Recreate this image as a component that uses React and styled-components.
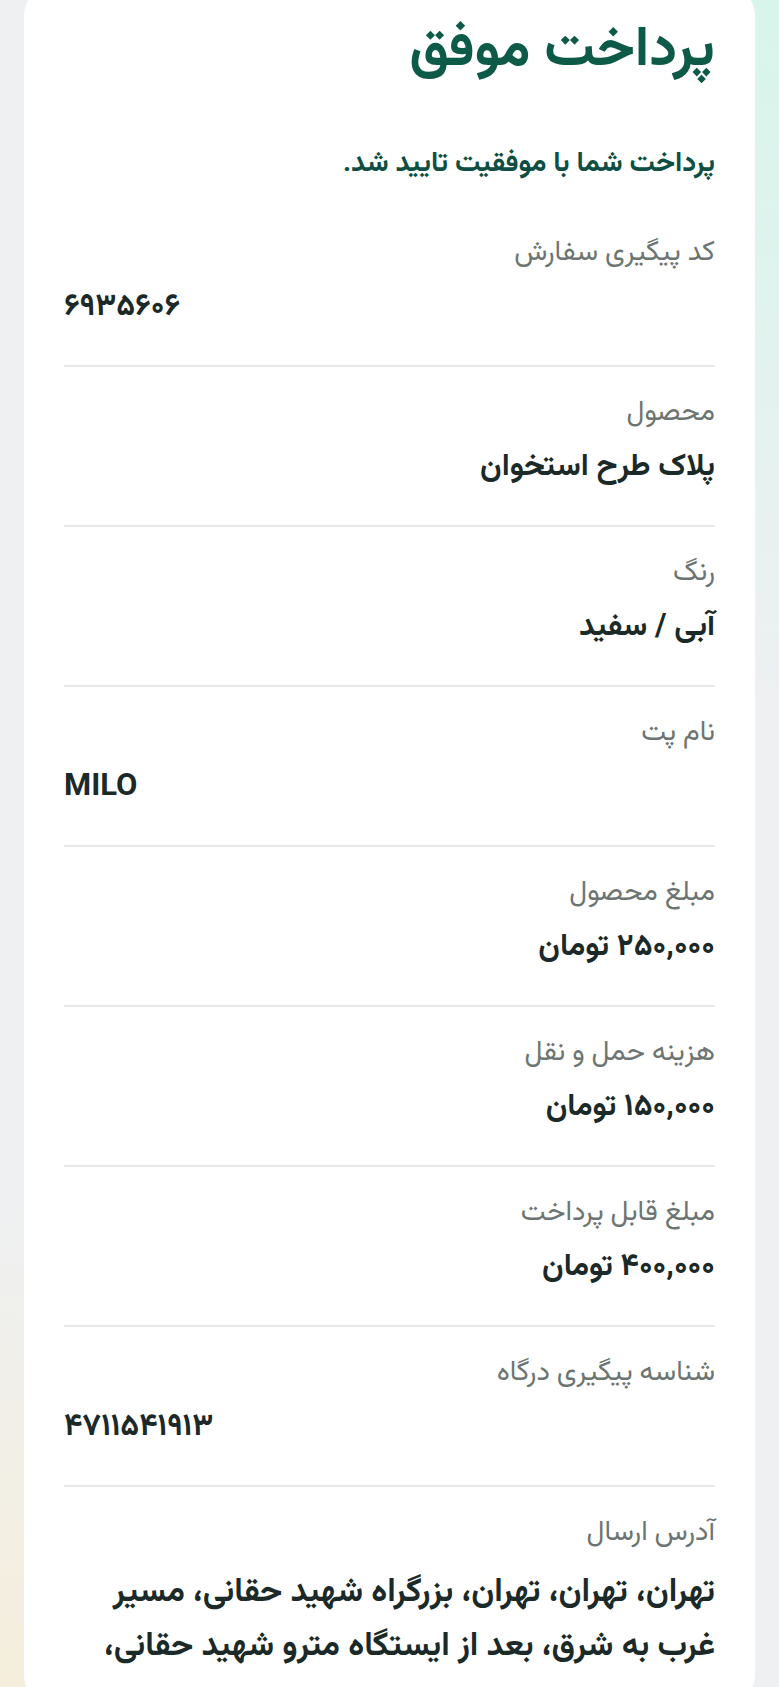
import React from 'react';
import styled, { createGlobalStyle } from 'styled-components';

const GlobalStyle = createGlobalStyle`
  * {
    box-sizing: border-box;
  }
  html, body {
    margin: 0;
    padding: 0;
  }
  body {
    min-height: 100vh;
    overflow: hidden;
    font-family: Roboto, Vazirmatn, "Noto Sans Arabic", "DejaVu Sans", sans-serif;
    background:
      radial-gradient(ellipse 520px 700px at 100% 0%, #d7f5eb 0%, rgba(215, 245, 235, 0) 100%),
      radial-gradient(ellipse 420px 520px at 0% 100%, #f5eedb 0%, rgba(245, 238, 219, 0) 100%),
      #eef0f2;
  }
`;

const Page = styled.div`
  display: flex;
  justify-content: center;
  padding: 0 24px;
`;

const Card = styled.div`
  width: 100%;
  margin-top: -16px;
  min-height: 1720px;
  background: #ffffff;
  border-radius: 32px;
  padding: 24px 40px 0;
  direction: rtl;
`;

const Title = styled.h1`
  margin: 0;
  font-size: 56px;
  line-height: 76px;
  font-weight: 700;
  color: #0d5a49;
`;

const Subtitle = styled.p`
  margin: 58px 0 0;
  font-size: 28px;
  line-height: 40px;
  font-weight: 700;
  color: #0f4f43;
`;

const List = styled.div`
  display: flex;
  flex-direction: column;
  margin-top: 25px;
`;

const Row = styled.div`
  display: flex;
  flex-direction: column;
  gap: 10px;
  padding: 24px 0 36px;
  border-bottom: ${({ $last }) => ($last ? 'none' : '2px solid #e5e7e8')};
`;

const Label = styled.div`
  font-size: 28px;
  line-height: 40px;
  font-weight: 400;
  color: #6d7572;
`;

const Value = styled.div`
  font-size: ${({ $multiline }) => ($multiline ? '33px' : '31px')};
  line-height: ${({ $multiline }) => ($multiline ? '54px' : '48px')};
  margin-top: ${({ $multiline }) => ($multiline ? '2px' : '0')};
  font-weight: 700;
  color: #1b2a28;
  text-align: ${({ $align }) => $align};
`;

const items = [
  { label: 'کد پیگیری سفارش', value: '۶۹۳۵۶۰۶', dir: 'ltr', align: 'left' },
  { label: 'محصول', value: 'پلاک طرح استخوان', dir: 'rtl', align: 'right' },
  { label: 'رنگ', value: 'آبی / سفید', dir: 'rtl', align: 'right' },
  { label: 'نام پت', value: 'MILO', dir: 'ltr', align: 'left' },
  { label: 'مبلغ محصول', value: '۲۵۰,۰۰۰ تومان', dir: 'rtl', align: 'right' },
  { label: 'هزینه حمل و نقل', value: '۱۵۰,۰۰۰ تومان', dir: 'rtl', align: 'right' },
  { label: 'مبلغ قابل پرداخت', value: '۴۰۰,۰۰۰ تومان', dir: 'rtl', align: 'right' },
  { label: 'شناسه پیگیری درگاه', value: '۴۷۱۱۵۴۱۹۱۳', dir: 'ltr', align: 'left' },
  {
    label: 'آدرس ارسال',
    value: 'تهران، تهران، تهران، بزرگراه شهید حقانی، مسیر غرب به شرق، بعد از ایستگاه مترو شهید حقانی،',
    dir: 'rtl',
    align: 'right',
    multiline: true,
  },
];

const App = () => {
  return (
    <Page>
      <GlobalStyle />
      <Card>
        <Title>پرداخت موفق</Title>
        <Subtitle>پرداخت شما با موفقیت تایید شد.</Subtitle>
        <List>
          {items.map((item, i) => (
            <Row key={item.label} $last={i === items.length - 1}>
              <Label>{item.label}</Label>
              <Value dir={item.dir} $align={item.align} $multiline={item.multiline}>
                {item.value}
              </Value>
            </Row>
          ))}
        </List>
      </Card>
    </Page>
  );
};

export default App;
